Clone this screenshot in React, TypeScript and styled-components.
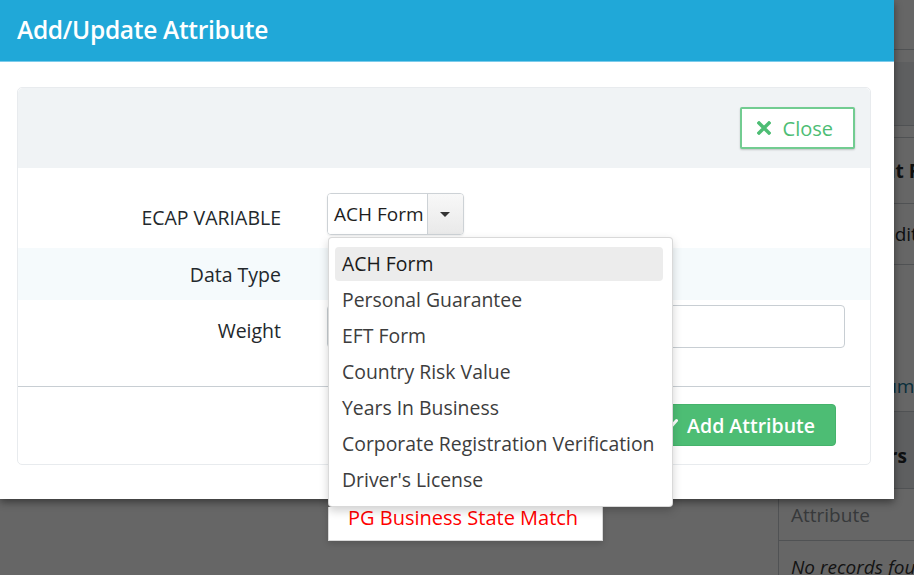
import React from 'react';
import styled, { createGlobalStyle } from 'styled-components';

const GlobalStyle = createGlobalStyle`
  html, body {
    margin: 0;
    padding: 0;
  }

  body {
    font-family: "Open Sans", "Noto Sans", sans-serif;
    color: #23282c;
  }

  * {
    box-sizing: border-box;
  }
`;

const Stage = styled.div`
  position: relative;
  width: 914px;
  height: 575px;
  overflow: hidden;
  background: #fff;
`;

/* page behind the modal */

const AppHeader = styled.header`
  height: 50px;
  background: #fff;
  border-bottom: 1px solid #c8ced3;
`;

const PageBody = styled.div`
  display: flex;
`;

const MainArea = styled.main`
  flex: 0 0 778px;
`;

const Aside = styled.aside`
  flex: 1;
  min-height: 525px;
  border-left: 1px solid #c8ced3;
  padding-top: 12px;
`;

const AsideHead = styled.div`
  height: 64px;
  background: #ebedef;
  border-bottom: 1px solid #c8ced3;
  margin-bottom: 11px;
`;

const AsideRow = styled.div<{ $height: number; $bold?: boolean; $band?: boolean; $tone?: string; $italic?: boolean; $pad?: string; $indent?: number }>`
  height: ${({ $height }) => $height}px;
  display: flex;
  align-items: center;
  padding: ${({ $pad }) => $pad || '0'};
  padding-left: ${({ $indent }) => $indent ?? 12}px;
  border-top: 1px solid #c8ced3;
  background: ${({ $band }) => ($band ? '#ebedef' : '#fff')};
  font-size: 19px;
  white-space: nowrap;
  font-weight: ${({ $bold }) => ($bold ? 700 : 400)};
  font-style: ${({ $italic }) => ($italic ? 'italic' : 'normal')};
  color: ${({ $tone }) => $tone || '#23282c'};
`;

const Backdrop = styled.div`
  position: absolute;
  inset: 0;
  background: rgba(0, 0, 0, 0.6);
`;

/* modal */

const Modal = styled.div`
  position: absolute;
  top: 0;
  left: 0;
  width: 894px;
  background: #fff;
  box-shadow: 0 3px 8px rgba(0, 0, 0, 0.45);
`;

const ModalHeader = styled.div`
  height: 62px;
  display: flex;
  align-items: center;
  padding: 0 0 3px 17px;
  background: #20a8d8;
  border-bottom: 1px solid #7ccbeb;
`;

const ModalTitle = styled.h4`
  margin: 0;
  color: #fff;
  font-size: 24.5px;
  font-weight: 600;
  letter-spacing: -0.3px;
`;

const ModalBody = styled.div`
  padding: 25px 23px 34px 17px;
`;

const Panel = styled.div`
  border: 1px solid #e8ebee;
  border-radius: 5px;
`;

const PanelHead = styled.div`
  height: 80px;
  display: flex;
  align-items: center;
  justify-content: flex-end;
  padding-right: 15px;
  background: #f0f3f5;
  border-radius: 5px 5px 0 0;
`;

const OutlineButton = styled.button`
  height: 42px;
  display: inline-flex;
  align-items: center;
  gap: 12px;
  padding: 0 20px 0 15px;
  background: #fff;
  border: 2px solid #72cc91;
  border-radius: 2px;
  box-shadow: 0 1px 2px rgba(0, 0, 0, 0.2);
  color: #4dbd74;
  font-family: inherit;
  font-size: 20px;
`;

const FormBody = styled.div`
  padding-bottom: 38px;
`;

const FormRow = styled.div<{ $striped?: boolean; $pad: string }>`
  display: grid;
  grid-template-columns: 263px 1fr;
  column-gap: 46px;
  align-items: center;
  padding: ${({ $pad }) => $pad};
  padding-right: 25px;
  background: ${({ $striped }) => ($striped ? '#f5fafc' : 'transparent')};
`;

const Label = styled.label`
  padding-top: 8px;
  text-align: right;
  font-size: 19.5px;
  line-height: 26px;
  color: #23282c;
`;

const SelectWrap = styled.div`
  position: relative;
  justify-self: start;
`;

const SelectButton = styled.div`
  height: 42px;
  display: flex;
  align-items: stretch;
  border: 1px solid #cdd2d6;
  border-radius: 4px;
  box-shadow: 0 1px 2px rgba(0, 0, 0, 0.08);
  overflow: hidden;
`;

const SelectText = styled.span`
  display: flex;
  align-items: center;
  padding: 0 3px 0 6px;
  font-size: 19px;
  color: #1e1e1e;
  background: #fff;
`;

const Caret = styled.span`
  width: 36px;
  display: flex;
  align-items: center;
  justify-content: center;
  background: linear-gradient(#f8f8f8, #e9e9e9);
  border-left: 1px solid #cdd2d6;

  &::after {
    content: '';
    border-left: 5px solid transparent;
    border-right: 5px solid transparent;
    border-top: 5px solid #333;
  }
`;

const DropLayer = styled.div`
  position: absolute;
  top: calc(100% + 2px);
  left: 1px;
  z-index: 10;
  display: flex;
  flex-direction: column;
  align-items: flex-start;
`;

const Menu = styled.ul`
  position: relative;
  z-index: 2;
  width: 345px;
  margin: 0;
  padding: 9px 9px 9px 6px;
  list-style: none;
  background: #fff;
  border: 1px solid rgba(0, 0, 0, 0.15);
  border-radius: 4px;
  box-shadow: 0 4px 10px rgba(0, 0, 0, 0.18);
`;

const MenuItem = styled.li<{ $active?: boolean }>`
  height: 34px;
  padding: 0 7px;
  margin-bottom: 2px;
  border-radius: 4px;
  line-height: 34px;
  font-size: 19.4px;
  white-space: nowrap;
  color: ${({ $active }) => ($active ? '#1a1a1a' : '#3d3d3d')};
  background: ${({ $active }) => ($active ? '#ececec' : 'transparent')};

  &:last-child {
    margin-bottom: 0;
  }
`;

const ExtraOption = styled.div`
  width: 275px;
  height: 34px;
  padding-left: 19px;
  background: #fff;
  border: 1px solid rgba(0, 0, 0, 0.15);
  border-top: none;
  box-shadow: 0 3px 6px rgba(0, 0, 0, 0.15);
  color: #ff0000;
  font-size: 20px;
  line-height: 22px;
  white-space: nowrap;
`;

const TextInput = styled.input`
  width: 100%;
  height: 43px;
  padding: 0 12px;
  border: 1px solid #c8ced3;
  border-radius: 4px;
  font-family: inherit;
  font-size: 19px;
`;

const PanelFoot = styled.div`
  display: flex;
  justify-content: flex-end;
  padding: 17px 34px 18px;
  border-top: 1px solid #c8ced3;
`;

const SuccessButton = styled.button`
  height: 42px;
  display: inline-flex;
  align-items: center;
  gap: 9px;
  padding: 0 20px 0 13px;
  background: #4dbd74;
  border: 1px solid #45b36b;
  border-radius: 4px;
  color: #fff;
  font-family: inherit;
  font-size: 19.5px;
  font-weight: 600;
`;

const options = [
  'ACH Form',
  'Personal Guarantee',
  'EFT Form',
  'Country Risk Value',
  'Years In Business',
  'Corporate Registration Verification',
  "Driver's License",
];

const TimesIcon = () => (
  <svg width="14" height="14" viewBox="0 0 14 14">
    <path d="M2 2 L12 12 M12 2 L2 12" stroke="currentColor" strokeWidth="3.4" strokeLinecap="square" />
  </svg>
);

const CheckIcon = () => (
  <svg width="15" height="14" viewBox="0 0 15 14">
    <path d="M1.5 7.5 L5.5 11.5 L13.5 2.5" stroke="currentColor" strokeWidth="3" fill="none" strokeLinecap="round" />
  </svg>
);

const App = () => (
  <Stage>
    <GlobalStyle />
    <AppHeader />
    <PageBody>
      <MainArea />
      <Aside>
        <AsideHead />
        <AsideRow $height={66} $bold $indent={12}>Assessment Result</AsideRow>
        <AsideRow $height={61} $indent={14}>Manual Credit</AsideRow>
        <AsideRow $height={147} $tone="#167495" $pad="96px 0 0">Attribute Summary</AsideRow>
        <AsideRow $height={77} $band $bold $pad="12px 0 0" $indent={17}>Parameters</AsideRow>
        <AsideRow $height={52} $tone="#8a8f94">Attribute</AsideRow>
        <AsideRow $height={52} $italic $tone="#333">No records found</AsideRow>
      </Aside>
    </PageBody>
    <Backdrop />

    <Modal>
      <ModalHeader>
        <ModalTitle>Add/Update Attribute</ModalTitle>
      </ModalHeader>
      <ModalBody>
        <Panel>
          <PanelHead>
            <OutlineButton>
              <TimesIcon />
              Close
            </OutlineButton>
          </PanelHead>
          <FormBody>
            <FormRow $pad="25px 0 13px">
              <Label>ECAP VARIABLE</Label>
              <SelectWrap>
                <SelectButton>
                  <SelectText>ACH Form</SelectText>
                  <Caret />
                </SelectButton>
                <DropLayer>
                  <Menu>
                    {options.map((o, i) => (
                      <MenuItem key={o} $active={i === 0}>{o}</MenuItem>
                    ))}
                  </Menu>
                  <ExtraOption>PG Business State Match</ExtraOption>
                </DropLayer>
              </SelectWrap>
            </FormRow>
            <FormRow $striped $pad="6px 0 12px">
              <Label>Data Type</Label>
              <div />
            </FormRow>
            <FormRow $pad="5px 0 0">
              <Label>Weight</Label>
              <TextInput />
            </FormRow>
          </FormBody>
          <PanelFoot>
            <SuccessButton>
              <CheckIcon />
              Add Attribute
            </SuccessButton>
          </PanelFoot>
        </Panel>
      </ModalBody>
    </Modal>
  </Stage>
);

export default App;
